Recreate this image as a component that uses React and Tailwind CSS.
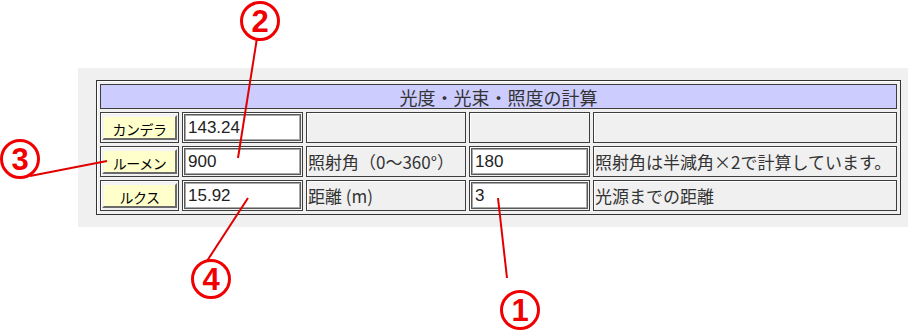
import React from 'react'

const jp = { fontFamily: '"Noto Sans CJK JP", "Noto Sans", sans-serif' }
const num = { fontFamily: '"Liberation Sans", Arial, sans-serif' }

const cell = 'border border-[#3d3d3d] bg-[#f0f0f0] p-px shadow-[inset_1px_1px_0_#ffffff]'

function UnitButton({ label }) {
  return (
    <div className={`${cell} flex items-center px-px`}>
      <button
        type="button"
        style={jp}
        className="h-[25px] w-full border-2 border-t-[#f4f4f4] border-l-[#f4f4f4] border-b-[#6a6a6a] border-r-[#6a6a6a] bg-[#ffffcc] pt-[2px] text-[14px] leading-none tracking-[-0.5px] text-black"
      >
        {label}
      </button>
    </div>
  )
}

function ValueBox({ value }) {
  return (
    <div className={cell}>
      <div
        style={num}
        className="flex h-full items-center border border-[#5a5a5a] bg-white pl-[3px] text-[17px] text-[#222] shadow-[inset_0_0_0_1px_#a8a8a8]"
      >
        {value}
      </div>
    </div>
  )
}

function Label({ children }) {
  return (
    <div className={`${cell} flex items-center pl-[1px]`}>
      <span style={jp} className="whitespace-nowrap text-[17px] leading-none text-[#333]">
        {children}
      </span>
    </div>
  )
}

function Badge({ cx, cy, n }) {
  return (
    <g>
      <circle cx={cx} cy={cy} r="18.5" fill="white" stroke="#f00000" strokeWidth="3" />
      <text
        x={cx}
        y={cy + 11}
        textAnchor="middle"
        fontFamily="Liberation Sans, Arial, sans-serif"
        fontWeight="bold"
        fontSize="31"
        fill="#f00000"
      >
        {n}
      </text>
    </g>
  )
}

export default function App() {
  return (
    <div className="relative h-[330px] w-[908px] overflow-hidden bg-white">
      <div className="ml-[78px] mt-[68px] w-[830px] bg-[#f0f0f0] pb-[12px] pl-[18px] pr-[7px] pt-[12px]">
        <div className="grid grid-cols-[79px_121px_160px_121px_304px] grid-rows-[25px_31px_31px_31px] gap-[3px] border border-[#333] p-[3px] shadow-[inset_1px_1px_0_#ffffff]">
          <div className="col-span-5 flex items-center justify-center border border-[#3d3d3d] bg-[#ccccff]">
            <span style={jp} className="text-[18px] leading-none text-[#333]">
              光度・光束・照度の計算
            </span>
          </div>

          <UnitButton label="カンデラ" />
          <ValueBox value="143.24" />
          <Label />
          <Label />
          <Label />

          <UnitButton label="ルーメン" />
          <ValueBox value="900" />
          <Label>照射角（0～360°）</Label>
          <ValueBox value="180" />
          <Label>照射角は半減角×2で計算しています。</Label>

          <UnitButton label="ルクス" />
          <ValueBox value="15.92" />
          <Label>距離 (m)</Label>
          <ValueBox value="3" />
          <Label>光源までの距離</Label>
        </div>
      </div>

      <svg className="pointer-events-none absolute inset-0" width="908" height="330" viewBox="0 0 908 330">
        <g stroke="#e00000" strokeWidth="2">
          <line x1="257" y1="38" x2="238" y2="158" />
          <line x1="30" y1="176" x2="107" y2="161" />
          <line x1="207" y1="261" x2="248" y2="198" />
          <line x1="498" y1="198" x2="507" y2="278" />
        </g>
        <Badge cx={260} cy={21} n="2" />
        <Badge cx={20} cy={159} n="3" />
        <Badge cx={211} cy={279} n="4" />
        <Badge cx={520} cy={310} n="1" />
      </svg>
    </div>
  )
}
